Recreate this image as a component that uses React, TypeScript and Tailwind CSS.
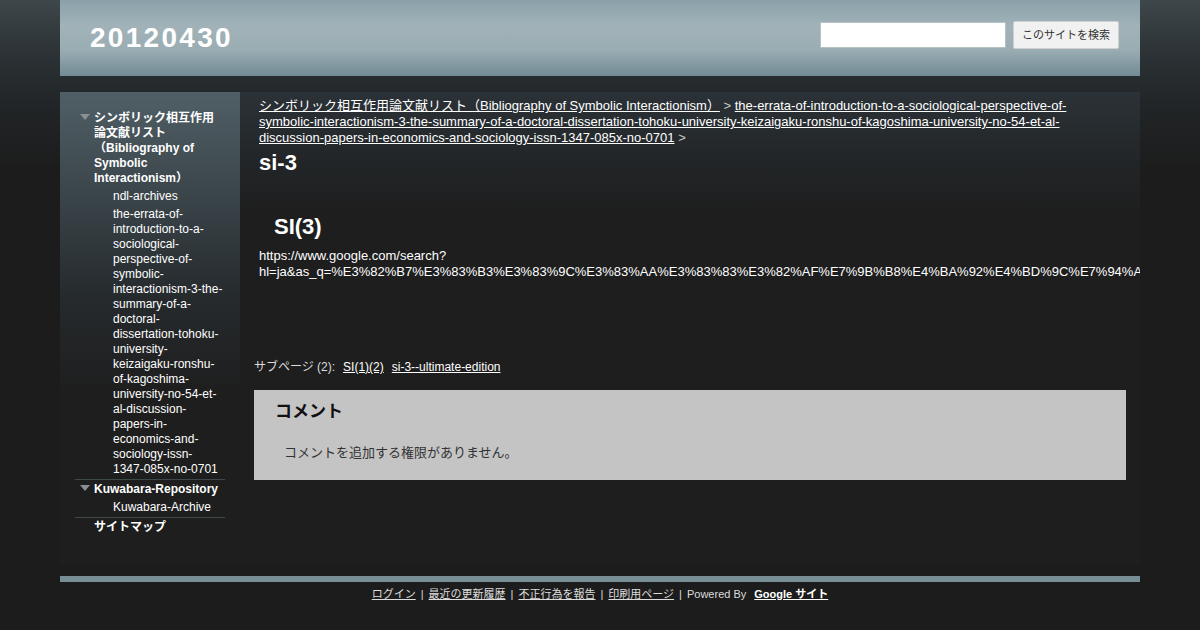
const FONT = { fontFamily: '"Liberation Sans", Arial, "Noto Sans CJK JP", sans-serif' };

const URL_TEXT =
  'hl=ja&as_q=%E3%82%B7%E3%83%B3%E3%83%9C%E3%83%AA%E3%83%83%E3%82%AF%E7%9B%B8%E4%BA%92%E4%BD%9C%E7%94%A8%E8%AB%96%E6%96%87%E7%8C%AE';

// sidebar wraps this long page name by hand, the browser breaks it differently
const ERRATA_LINES = [
  'the-errata-of-',
  'introduction-to-a-',
  'sociological-',
  'perspective-of-',
  'symbolic-',
  'interactionism-3-the-',
  'summary-of-a-',
  'doctoral-',
  'dissertation-tohoku-',
  'university-',
  'keizaigaku-ronshu-',
  'of-kagoshima-',
  'university-no-54-et-',
  'al-discussion-',
  'papers-in-',
  'economics-and-',
  'sociology-issn-',
  '1347-085x-no-0701',
];

function Triangle() {
  return (
    <svg width="10" height="6" viewBox="0 0 10 6" className="absolute left-[-14px] top-[5px]">
      <polygon points="0,0 10,0 5,6" fill="#8a8f92" />
    </svg>
  );
}

function Sidebar() {
  return (
    <div className="w-[180px] shrink-0 px-[15px] pt-[17px] text-[12px] leading-[15px] text-white bg-[linear-gradient(to_bottom,#505f66_0px,#3b464b_100px,#262b2e_200px,#1e1e1e_300px)]">
      <div className="pb-[1px]">
        <div className="relative ml-[19px] py-[1.5px] font-bold">
          <Triangle />
          シンボリック相互作用論文献リスト（Bibliography of Symbolic Interactionism）
        </div>
        <div className="ml-[38px] py-[1.5px]">ndl-archives</div>
        <div className="ml-[38px] py-[1.5px] whitespace-nowrap">
          {ERRATA_LINES.map((line) => (
            <div key={line}>{line}</div>
          ))}
        </div>
      </div>
      <div className="border-t border-[#3e4749] pb-[1px]">
        <div className="relative ml-[19px] py-[1.5px] font-bold">
          <Triangle />
          Kuwabara-Repository
        </div>
        <div className="ml-[38px] py-[1.5px]">Kuwabara-Archive</div>
      </div>
      <div className="border-t border-[#3e4749]">
        <div className="ml-[19px] py-[1.5px] font-bold">サイトマップ</div>
      </div>
    </div>
  );
}

function Content() {
  return (
    <div className="flex-1 min-w-0 overflow-hidden px-[14px] pt-[6px] text-white bg-[linear-gradient(to_bottom,#2b3237_0px,#23272a_60px,#1e1e1e_120px)]">
      <div className="px-[5px]">
        <div className="text-[13px] leading-[16px] text-[#cccccc] pr-[5px]">
          <a className="text-white underline">シンボリック相互作用論文献リスト（Bibliography of Symbolic Interactionism）</a>
          {' '}&gt;{' '}
          <a className="text-white underline">
            the-errata-of-introduction-to-a-sociological-perspective-of-symbolic-interactionism-3-the-summary-of-a-doctoral-dissertation-tohoku-university-keizaigaku-ronshu-of-kagoshima-university-no-54-et-al-discussion-papers-in-economics-and-sociology-issn-1347-085x-no-0701
          </a>
          {' '}&gt;
        </div>
        <h1 className="mt-[4px] text-[22px] leading-[26px] font-bold">si-3</h1>
        <h2 className="mt-[38px] ml-[15px] text-[22px] leading-[26px] font-bold">SI(3)</h2>
        <div className="mt-[8px] text-[13px] leading-[16px] whitespace-nowrap">
          <div>https://www.google.com/search?</div>
          <div>{URL_TEXT}</div>
        </div>
      </div>
      <div className="mt-[80px] text-[12px] leading-[15px] text-[#dddddd] flex gap-[8px]">
        <span>サブページ (2):</span>
        <a className="text-white underline">SI(1)(2)</a>
        <a className="text-white underline">si-3--ultimate-edition</a>
      </div>
      <div className="mt-[15px] h-[90px] bg-[#c4c4c4] pt-[10px]">
        <h3 className="ml-[21px] text-[17px] leading-[24px] font-bold text-[#111111]">コメント</h3>
        <p className="ml-[30px] mt-[21px] text-[13px] leading-[16px] text-[#333333]">
          コメントを追加する権限がありません。
        </p>
      </div>
    </div>
  );
}

export default function App() {
  return (
    <div
      style={FONT}
      className="w-[1200px] h-[630px] overflow-hidden bg-[linear-gradient(to_bottom,#3e474b_0px,#2a3033_60px,#212426_110px,#1c1c1c_170px)]"
    >
      <div className="w-[1080px] mx-auto">
        <header className="h-[76px] flex items-center justify-between pl-[30px] pr-[21px] bg-[linear-gradient(to_bottom,#8ba1aa_0%,#a1b3b9_35%,#9aadb3_65%,#738b95_100%)]">
          <div className="text-[28px] font-bold tracking-[2.3px] text-white">20120430</div>
          <div className="flex items-center gap-[7px] mt-[-6px]">
            <input className="w-[186px] h-[26px] bg-white border border-[#b7c0c3] outline-none" />
            <button className="w-[106px] h-[28px] bg-[#f1f1f1] border border-[#d0d0d0] rounded-[2px] text-[11px] text-[#333333]">
              このサイトを検索
            </button>
          </div>
        </header>
        <main className="mt-[16px] h-[473px] flex bg-[#1e1e1e]">
          <Sidebar />
          <Content />
        </main>
        <div className="mt-[11px] h-[6px] bg-[#778e97]" />
        <footer className="pt-[5px] text-center text-[11px] leading-[14px] text-[#dddddd]">
          <a className="underline">ログイン</a>
          <span className="mx-[5px]">|</span>
          <a className="underline">最近の更新履歴</a>
          <span className="mx-[5px]">|</span>
          <a className="underline">不正行為を報告</a>
          <span className="mx-[5px]">|</span>
          <a className="underline">印刷用ページ</a>
          <span className="mx-[5px]">|</span>
          <span>Powered By</span>
          <a className="ml-[8px] underline font-bold text-white">Google サイト</a>
        </footer>
      </div>
    </div>
  );
}
